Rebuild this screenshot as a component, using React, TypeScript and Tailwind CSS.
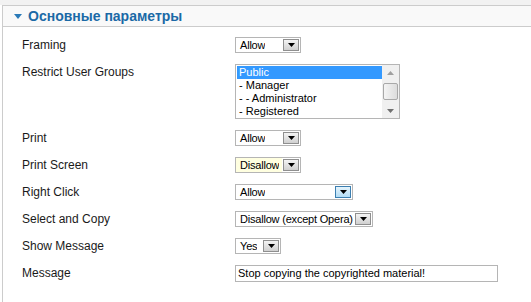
import React from "react";

const font = { fontFamily: '"Liberation Sans", Arial, sans-serif' };

function Arrow({ hover = false }: { hover?: boolean }) {
  return (
    <span
      className={
        hover
          ? "mr-[1px] mt-[1px] flex h-[12px] w-[16px] items-center justify-center border border-[#3c7fb1] bg-gradient-to-b from-[#e5f4fc] to-[#b2dcf5]"
          : "mr-[1px] mt-[1px] flex h-[12px] w-[16px] items-center justify-center border border-[#8f8f8f] bg-gradient-to-b from-[#f4f4f4] to-[#d0d0d0]"
      }
    >
      <svg width="7" height="4" viewBox="0 0 7 4">
        <path d="M0 0h7L3.5 4z" fill="#000" />
      </svg>
    </span>
  );
}

function Select({
  value,
  width,
  hover = false,
  yellow = false,
}: {
  value: string;
  width: string;
  hover?: boolean;
  yellow?: boolean;
}) {
  return (
    <div className={`flex h-[16px] border border-[#b5b5b5] ${yellow ? "bg-[#ffffe0]" : "bg-white"} ${width}`}>
      <span className="overflow-hidden whitespace-nowrap pl-[4px] text-[11px] leading-[14px] tracking-[-0.2px] text-black">
        {value}
      </span>
      <span className="ml-auto flex shrink-0 bg-white pl-[1px]">
        <Arrow hover={hover} />
      </span>
    </div>
  );
}

function Row({ label, children }: { label: string; children: React.ReactNode }) {
  return (
    <div className="flex pt-[6px] pb-[5px]">
      <div className="w-[213px] text-[12px] leading-[16px] text-[#1a1a1a]">{label}</div>
      {children}
    </div>
  );
}

function ListBox() {
  const items = ["Public", "- Manager", "- - Administrator", "- Registered"];
  return (
    <div className="flex h-[55px] w-[165px] border border-[#b5b5b5] bg-white">
      <div className="flex-1 pt-[1px] pl-[1px]">
        {items.map((it, i) => (
          <div
            key={it}
            className={
              i === 0
                ? "bg-[#3399ff] pl-[2px] text-[11px] leading-[13px] text-white"
                : "pl-[2px] text-[11px] leading-[13px] text-black"
            }
          >
            {it}
          </div>
        ))}
      </div>
      <div className="flex w-[17px] flex-col items-center bg-[#f0f0f0]">
        <svg width="7" height="4" viewBox="0 0 7 4" className="mt-[6px]">
          <path d="M3.5 0L7 4H0z" fill="#a0a0a0" />
        </svg>
        <div className="mt-[8px] h-[17px] w-[15px] rounded-[2px] border border-[#a8a8a8] bg-gradient-to-r from-[#f4f4f4] to-[#dcdcdc]" />
        <svg width="7" height="4" viewBox="0 0 7 4" className="mt-[9px]">
          <path d="M0 0h7L3.5 4z" fill="#707070" />
        </svg>
      </div>
    </div>
  );
}

export default function App() {
  return (
    <div className="h-[302px] w-[531px] overflow-hidden bg-white" style={font}>
      <div className="h-[5px] bg-[#f2f2f2]" />
      <div className="ml-[2px] h-[297px] border-l border-t border-[#cccccc]">
        <div className="flex h-[21px] items-center border-b border-[#cccccc] bg-[#f9f9f9]">
          <svg width="8" height="5" viewBox="0 0 8 5" className="ml-[11px]">
            <path d="M0 0h8L4 5z" fill="#2a7ab8" />
          </svg>
          <span className="ml-[6px] text-[14px] font-bold leading-[20px] text-[#1b69a6]">
            Основные параметры
          </span>
        </div>
        <div className="pl-[19px] pt-[4px]">
          <Row label="Framing">
            <Select value="Allow" width="w-[66px]" />
          </Row>
          <Row label="Restrict User Groups">
            <ListBox />
          </Row>
          <Row label="Print">
            <Select value="Allow" width="w-[66px]" />
          </Row>
          <Row label="Print Screen">
            <Select value="Disallow" width="w-[66px]" yellow />
          </Row>
          <Row label="Right Click">
            <Select value="Allow" width="w-[118px]" hover />
          </Row>
          <Row label="Select and Copy">
            <Select value="Disallow (except Opera)" width="w-[138px]" />
          </Row>
          <Row label="Show Message">
            <Select value="Yes" width="w-[46px]" />
          </Row>
          <Row label="Message">
            <div className="h-[17px] w-[263px] whitespace-nowrap border border-[#b5b5b5] bg-white pl-[2px] text-[11px] leading-[15px] text-black">
              Stop copying the copyrighted material!
            </div>
          </Row>
        </div>
      </div>
    </div>
  );
}
